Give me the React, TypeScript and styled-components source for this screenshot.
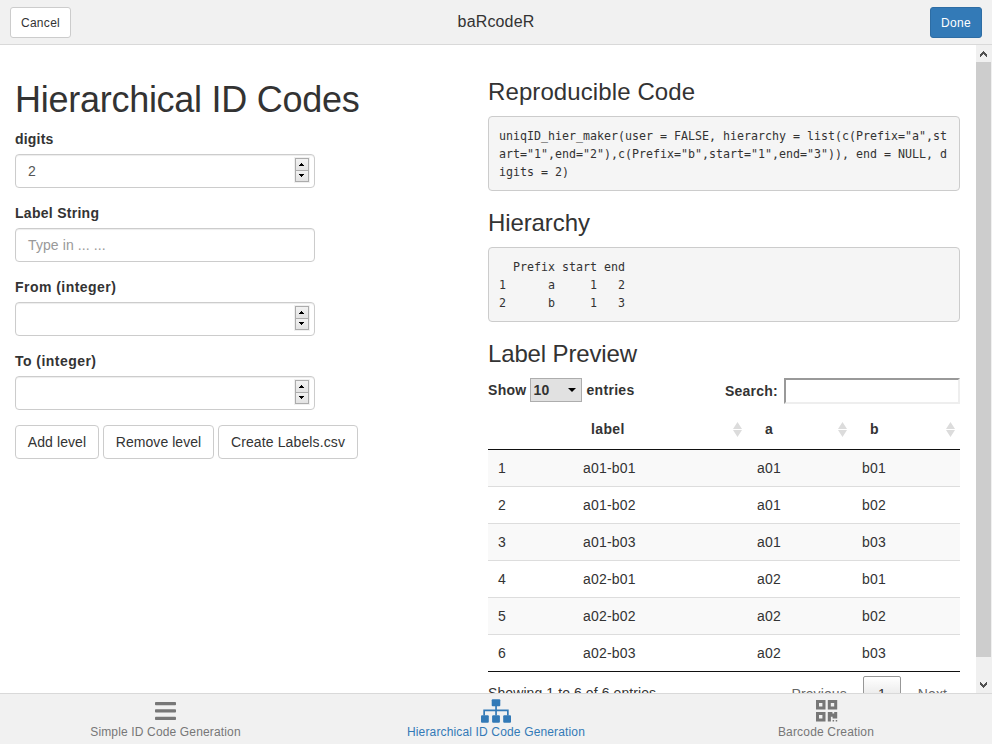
import React from "react";
import styled, { createGlobalStyle, css } from "styled-components";

const GlobalStyle = createGlobalStyle`
  *, *::before, *::after { box-sizing: border-box; }
  html, body { margin: 0; padding: 0; background: #fff; }
  body {
    font-family: "Liberation Sans", Arial, sans-serif;
    font-size: 14px;
    line-height: 20px;
    color: #333;
    overflow: hidden;
  }
`;

const Page = styled.div`
  display: flex;
  flex-direction: column;
  width: 992px;
  height: 744px;
`;

const TitleBar = styled.header`
  flex: none;
  display: grid;
  grid-template-columns: 1fr auto 1fr;
  align-items: center;
  height: 45px;
  padding: 0 10px;
  background: #f1f1f1;
  border-bottom: 1px solid #d9d9d9;
`;

const Title = styled.h1`
  margin: 0;
  font-size: 16px;
  font-weight: 400;
  letter-spacing: 0.15px;
`;

const BarButton = styled.button<{ $primary?: boolean }>`
  justify-self: ${(p) => (p.$primary ? "end" : "start")};
  width: ${(p) => (p.$primary ? 52 : 61)}px;
  height: 31px;
  margin: 1px 0 0;
  padding: 0;
  font: 12px/18px "Liberation Sans", Arial, sans-serif;
  letter-spacing: 0.3px;
  color: ${(p) => (p.$primary ? "#fff" : "#333")};
  background: ${(p) => (p.$primary ? "#337ab7" : "#fff")};
  border: 1px solid ${(p) => (p.$primary ? "#2e6da4" : "#ccc")};
  border-radius: 3px;
`;

const Body = styled.main`
  flex: 1;
  min-height: 0;
  display: flex;
  overflow: hidden;
`;

const Columns = styled.div`
  flex: 1;
  display: grid;
  grid-template-columns: 473px 472px;
  padding: 35px 0 0 15px;
`;

const Panel = styled.section`
  min-width: 0;
`;

const PageHeading = styled.h2`
  margin: 0 0 10px;
  height: 39px;
  font-size: 36px;
  font-weight: 400;
  line-height: 40px;
  letter-spacing: -0.27px;
`;

const SectionHeading = styled.h3<{ $spacing?: number }>`
  margin: 20px 0 10px;
  height: 26px;
  font-size: 24px;
  font-weight: 400;
  line-height: 23px;
  letter-spacing: ${(p) => p.$spacing ?? 0}px;

  &:first-child { margin-top: 0; }
`;

const Field = styled.div`
  width: 300px;
  margin-bottom: 15px;
`;

const FieldLabel = styled.label<{ $spacing?: number }>`
  display: block;
  margin-bottom: 5px;
  font-weight: 700;
  letter-spacing: ${(p) => p.$spacing ?? 0.2}px;
`;

const FieldBox = styled.div<{ $placeholder?: boolean }>`
  display: flex;
  align-items: center;
  justify-content: space-between;
  height: 34px;
  padding: 0 4px 0 12px;
  color: ${(p) => (p.$placeholder ? "#999" : "#555")};
  letter-spacing: ${(p) => (p.$placeholder ? 0.1 : 0)}px;
  border: 1px solid #ccc;
  border-radius: 4px;
  box-shadow: inset 0 1px 1px rgba(0, 0, 0, 0.075);
`;

const SpinnerBox = styled.span`
  display: flex;
  flex-direction: column;
  width: 16px;
  height: 26px;
  margin-top: -2px;
  padding: 1px;
  background: #f0f0f0;
`;

const SpinnerButton = styled.span<{ $down?: boolean }>`
  flex: 1;
  display: flex;
  align-items: center;
  justify-content: center;
  padding-right: 1px;
  background: linear-gradient(#f2f2f2, #e3e3e3);
  border: 1px solid #acacac;
  ${(p) => p.$down && css`margin-top: -1px;`}
`;

const ButtonRow = styled.div`
  display: flex;
  gap: 4px;
`;

const ActionButton = styled.button<{ $width: number; $spacing: number }>`
  width: ${(p) => p.$width}px;
  height: 34px;
  padding: 0;
  font: 14px/20px "Liberation Sans", Arial, sans-serif;
  letter-spacing: ${(p) => p.$spacing}px;
  color: #333;
  background: #fff;
  border: 1px solid #ccc;
  border-radius: 4px;
`;

const CodeBlock = styled.pre`
  height: 75px;
  margin: 0;
  padding: 10px;
  font: 11.63px/18px "DejaVu Sans Mono", monospace;
  white-space: pre;
  background: #f5f5f5;
  border: 1px solid #ccc;
  border-radius: 4px;
`;

const TableTools = styled.div`
  display: flex;
  justify-content: space-between;
  height: 26px;
  font-weight: 700;
`;

const LengthControl = styled.div`
  display: flex;
  align-items: center;
  height: 24px;
  letter-spacing: 0.3px;
`;

const LengthSelect = styled.span`
  display: flex;
  align-items: center;
  justify-content: space-between;
  width: 52px;
  height: 24px;
  margin: 0 5px 0 3px;
  padding: 0 5px 0 3px;
  background: #e1e1e1;
  border: 1px solid #adadad;
`;

const SearchControl = styled.label`
  display: flex;
  align-items: center;
  gap: 6px;
  letter-spacing: 0.25px;
`;

const SearchInput = styled.input`
  width: 176px;
  height: 26px;
  padding: 1px;
  background: #fff;
  border: 2px solid;
  border-color: #999 #eee #eee #999;
  outline: none;
`;

const DataTable = styled.div`
  border-bottom: 1px solid #111;
`;

const TableRow = styled.div<{ $odd?: boolean; $last?: boolean }>`
  display: grid;
  grid-template-columns: 85px 174px 105px 108px;
  align-items: center;
  height: ${(p) => (p.$last ? 36 : 37)}px;
  background: ${(p) => (p.$odd ? "#f9f9f9" : "#fff")};
  border-bottom: ${(p) => (p.$last ? "none" : "1px solid #ddd")};
`;

const HeadRow = styled(TableRow)`
  height: 46px;
  padding-top: 5px;
  font-weight: 700;
  border-bottom: 1px solid #111;
`;

const HeadCell = styled.div`
  display: flex;
  align-items: center;
  justify-content: space-between;
  padding: 0 5px 0 18px;
  letter-spacing: 0.35px;
`;

const Cell = styled.div`
  padding-left: 10px;
  letter-spacing: 0.2px;
`;

const TableFooter = styled.div`
  display: flex;
  justify-content: space-between;
  padding-top: 4px;
  white-space: nowrap;
`;

const TableInfo = styled.div`
  padding-top: 7px;
  letter-spacing: 0.09px;
`;

const Pager = styled.div`
  display: flex;
  align-items: flex-start;
  height: 32px;
  color: #666;
`;

const PagerLink = styled.span`
  padding: 8px 16px 0 17px;
  letter-spacing: 0.1px;

  &:last-child { padding-right: 13px; }
`;

const CurrentPage = styled.span`
  width: 38px;
  height: 33px;
  padding-top: 7px;
  text-align: center;
  color: #333;
  background: linear-gradient(#fff, #dcdcdc);
  border: 1px solid #979797;
  border-radius: 2px;
`;

const ScrollTrack = styled.div`
  flex: none;
  display: flex;
  flex-direction: column;
  width: 16px;
  margin-left: auto;
  padding-right: 1px;
  background: #f0f0f0;
`;

const ScrollArrow = styled.div<{ $end?: boolean }>`
  flex: none;
  display: flex;
  align-items: center;
  justify-content: center;
  height: 17px;
  margin-top: ${(p) => (p.$end ? "auto" : 0)};
`;

const ScrollThumb = styled.div`
  flex: none;
  height: 595px;
  background: #cdcdcd;
`;

const TabBar = styled.nav`
  flex: none;
  display: grid;
  grid-template-columns: 331px 330px 330px;
  height: 51px;
  background: #f1f1f1;
  border-top: 1px solid #d9d9d9;
`;

const Tab = styled.a<{ $active?: boolean; $spacing: number }>`
  display: flex;
  flex-direction: column;
  align-items: center;
  padding-top: 4px;
  font-size: 12px;
  line-height: 18px;
  letter-spacing: ${(p) => p.$spacing}px;
  color: ${(p) => (p.$active ? "#337ab7" : "#777")};

  svg { display: block; margin-bottom: 1px; fill: currentColor; overflow: visible; }
`;

const Arrow = ({ down }: { down?: boolean }) => (
  <svg width="5" height="3" viewBox="0 0 5 3" shapeRendering="crispEdges">
    <path d={down ? "M0 0h5v1h-1v1h-1v1h-1v-1h-1v-1h-1z" : "M0 3h5v-1h-1v-1h-1v-1h-1v1h-1v1h-1z"} fill="#000" />
  </svg>
);

const Spinner = () => (
  <SpinnerBox>
    <SpinnerButton><Arrow /></SpinnerButton>
    <SpinnerButton $down><Arrow down /></SpinnerButton>
  </SpinnerBox>
);

const SortIcon = () => (
  <svg width="9" height="15" viewBox="0 0 9 15" fill="#dcdcdc">
    <path d="M4.5 0L9 7H0z M0 8h9L4.5 15z" />
  </svg>
);

const Chevron = ({ down }: { down?: boolean }) => (
  <svg width="7" height="6" viewBox="0 0 7 6" shapeRendering="crispEdges" fill="#505050">
    <path
      transform={down ? "matrix(1 0 0 -1 0 6)" : undefined}
      d="M3 0h1v1h1v1h1v1h1v3h-1v-1h-1v-1h-1v-1h-1v1h-1v1h-1v1h-1v-3h1v-1h1v-1h1z"
    />
  </svg>
);

const BarsIcon = () => (
  <svg width="21" height="24" viewBox="0 0 21 24">
    <rect x="0" y="4" width="21" height="3.3" rx="0.8" />
    <rect x="0" y="11.3" width="21" height="3.3" rx="0.8" />
    <rect x="0" y="18.7" width="21" height="3.3" rx="0.8" />
  </svg>
);

const SitemapIcon = () => (
  <svg width="30" height="24" viewBox="0 0 30 24">
    <rect x="10.7" y="1.2" width="8.6" height="7" rx="1" />
    <path d="M14.2 8h1.7v3.5h11.8v6H26v-4.2H15.9v4.2h-1.7v-4.2H4v4.2H2.3v-6h11.9z" />
    <rect x="0" y="17.2" width="7.8" height="7.5" rx="1" />
    <rect x="11.1" y="17.2" width="7.8" height="7.5" rx="1" />
    <rect x="22.2" y="17.2" width="7.8" height="7.5" rx="1" />
  </svg>
);

const QrIcon = () => (
  <svg width="21" height="24" viewBox="0 0 21 24">
    <path
      fillRule="evenodd"
      d="M0 2h9.5v9.5H0zM3 5.1v3.3h3.4V5.1zM11.8 2h9.4v9.5h-9.4zM14.8 5.1v3.3h3.4V5.1zM0 14h9.5v9.5H0zM3 17.1v3.3h3.4v-3.3zM11.8 14h4.6v1.6h1.8V14h3v6.4h-4.6v-1.6h-1.7v4.7h-3.1zM16.6 22h1.5v1.5h-1.5zM19.7 22h1.5v1.5h-1.5z"
    />
  </svg>
);

const CODE = `uniqID_hier_maker(user = FALSE, hierarchy = list(c(Prefix="a",st
art="1",end="2"),c(Prefix="b",start="1",end="3")), end = NULL, d
igits = 2)`;

const HIERARCHY = `  Prefix start end
1      a     1   2
2      b     1   3`;

const ROWS = [
  ["1", "a01-b01", "a01", "b01"],
  ["2", "a01-b02", "a01", "b02"],
  ["3", "a01-b03", "a01", "b03"],
  ["4", "a02-b01", "a02", "b01"],
  ["5", "a02-b02", "a02", "b02"],
  ["6", "a02-b03", "a02", "b03"],
];

export default function App() {
  return (
    <>
      <GlobalStyle />
      <Page>
        <TitleBar>
          <BarButton>Cancel</BarButton>
          <Title>baRcodeR</Title>
          <BarButton $primary>Done</BarButton>
        </TitleBar>
        <Body>
          <Columns>
            <Panel>
              <PageHeading>Hierarchical ID Codes</PageHeading>
              <Field>
                <FieldLabel>digits</FieldLabel>
                <FieldBox><span>2</span><Spinner /></FieldBox>
              </Field>
              <Field>
                <FieldLabel $spacing={0.28}>Label String</FieldLabel>
                <FieldBox $placeholder>Type in ... ...</FieldBox>
              </Field>
              <Field>
                <FieldLabel $spacing={0.46}>From (integer)</FieldLabel>
                <FieldBox><span /><Spinner /></FieldBox>
              </Field>
              <Field>
                <FieldLabel $spacing={0.46}>To (integer)</FieldLabel>
                <FieldBox><span /><Spinner /></FieldBox>
              </Field>
              <ButtonRow>
                <ActionButton $width={84} $spacing={0.08}>Add level</ActionButton>
                <ActionButton $width={111} $spacing={0.05}>Remove level</ActionButton>
                <ActionButton $width={140} $spacing={0.12}>Create Labels.csv</ActionButton>
              </ButtonRow>
            </Panel>
            <Panel>
              <SectionHeading $spacing={0.1}>Reproducible Code</SectionHeading>
              <CodeBlock>{CODE}</CodeBlock>
              <SectionHeading $spacing={-0.1}>Hierarchy</SectionHeading>
              <CodeBlock>{HIERARCHY}</CodeBlock>
              <SectionHeading $spacing={-0.14}>Label Preview</SectionHeading>
              <TableTools>
                <LengthControl>
                  Show
                  <LengthSelect>
                    10
                    <svg width="8" height="4" viewBox="0 0 8 4"><path d="M0 0h8L4 4z" /></svg>
                  </LengthSelect>
                  entries
                </LengthControl>
                <SearchControl>Search:<SearchInput /></SearchControl>
              </TableTools>
              <DataTable>
                <HeadRow>
                  <HeadCell />
                  {["label", "a", "b"].map((name) => (
                    <HeadCell key={name}>{name}<SortIcon /></HeadCell>
                  ))}
                </HeadRow>
                {ROWS.map((row, i) => (
                  <TableRow key={row[0]} $odd={i % 2 === 0} $last={i === ROWS.length - 1}>
                    {row.map((value, j) => <Cell key={j}>{value}</Cell>)}
                  </TableRow>
                ))}
              </DataTable>
              <TableFooter>
                <TableInfo>Showing 1 to 6 of 6 entries</TableInfo>
                <Pager>
                  <PagerLink>Previous</PagerLink>
                  <CurrentPage>1</CurrentPage>
                  <PagerLink>Next</PagerLink>
                </Pager>
              </TableFooter>
            </Panel>
          </Columns>
          <ScrollTrack>
            <ScrollArrow><Chevron /></ScrollArrow>
            <ScrollThumb />
            <ScrollArrow $end><Chevron down /></ScrollArrow>
          </ScrollTrack>
        </Body>
        <TabBar>
          <Tab $spacing={0.15}><BarsIcon />Simple ID Code Generation</Tab>
          <Tab $active $spacing={0.15}><SitemapIcon />Hierarchical ID Code Generation</Tab>
          <Tab $spacing={0.17}><QrIcon />Barcode Creation</Tab>
        </TabBar>
      </Page>
    </>
  );
}
